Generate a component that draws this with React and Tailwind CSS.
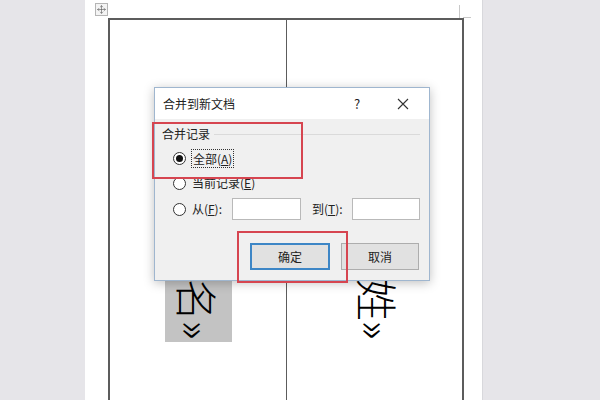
import { Move } from "lucide-react"

const cjk = { fontFamily: '"Noto Sans CJK SC", "Noto Sans", sans-serif' }

function Radio({ checked }) {
    return (
        <span className="flex h-[13px] w-[13px] items-center justify-center rounded-full border border-[#333] bg-white">
            {checked ? <span className="h-[7px] w-[7px] rounded-full bg-[#111]"></span> : null}
        </span>
    )
}

function MergeDialog() {
    return (
        <div
            className="absolute left-[154px] top-[87px] flex h-[194px] w-[276px] flex-col border border-[#9fb6cf] bg-[#f0f0f0] text-[12px] text-[#222] shadow-[0_2px_10px_rgba(0,0,0,0.25)]"
            style={cjk}
        >
            <div className="flex h-[31px] items-center bg-white pl-[8px] pr-[3px]">
                <span className="flex-1">合并到新文档</span>
                <span className="w-[46px] text-center text-[13px]">?</span>
                <span className="flex w-[46px] justify-center">
                    <svg width="12" height="12" viewBox="0 0 12 12">
                        <path d="M1 1L11 11M11 1L1 11" stroke="#333" strokeWidth="1.1" />
                    </svg>
                </span>
            </div>
            <div className="flex flex-col pl-[7px] pr-[9px]">
                <div className="mt-[7px] flex h-[16px] items-center gap-[4px]">
                    <span>合并记录</span>
                    <span className="h-px flex-1 bg-[#dadada]"></span>
                </div>
                <div className="ml-[11px] mt-[4px] flex h-[24px] items-center gap-[5px]">
                    <Radio checked />
                    <span className="border border-dotted border-[#333] px-px leading-[17px]">
                        全部(<u>A</u>)
                    </span>
                </div>
                <div className="ml-[11px] mt-px flex h-[24px] items-center gap-[6px]">
                    <Radio />
                    <span>
                        当前记录(<u>E</u>)
                    </span>
                </div>
                <div className="ml-[11px] mt-[2px] flex h-[24px] items-center">
                    <Radio />
                    <span className="ml-[6px] w-[40px]">
                        从(<u>F</u>):
                    </span>
                    <span className="h-[22px] w-[70px] border border-[#b9b9b9] bg-white"></span>
                    <span className="ml-[11px] w-[40px]">
                        到(<u>T</u>):
                    </span>
                    <span className="h-[22px] w-[69px] border border-[#b9b9b9] bg-white"></span>
                </div>
                <div className="mt-[22px] flex justify-end gap-[11px] pr-px">
                    <span className="flex h-[27px] w-[80px] items-center justify-center border-2 border-[#3d86c6] bg-[#e1e1e1]">
                        确定
                    </span>
                    <span className="flex h-[27px] w-[78px] items-center justify-center border border-[#adadad] bg-[#e1e1e1]">
                        取消
                    </span>
                </div>
            </div>
        </div>
    )
}

export default function App() {
    return (
        <div className="relative flex h-[400px] w-[600px] overflow-hidden bg-[#e6e5e9]">
            <div className="w-[85px]"></div>
            <div className="relative h-full w-[397px] bg-white pl-[23px] pt-[18px]">
                <span className="absolute left-[10px] top-[3px] flex h-[13px] w-[13px] items-center justify-center border border-[#b5b5b5] bg-[#f4f4f4]">
                    <Move size={9} strokeWidth={1.6} color="#555" />
                </span>
                <span className="absolute left-[374px] top-[5px] h-[13px] w-px bg-[#c8c8c8]"></span>
                <span className="absolute left-[378px] top-[17px] h-px w-[8px] bg-[#c8c8c8]"></span>
                <div className="flex h-[400px] w-[356px] border-x-2 border-t-2 border-[#5c5c5c]">
                    <div className="flex w-[177px] flex-col border-r-[1.5px] border-[#5c5c5c] pl-[55px] pt-[180px]">
                        <div className="flex h-[142px] w-[67px] flex-col items-center justify-end bg-[#c3c3c3] pb-[2px]">
                            <span
                                className="text-[42px] font-light leading-[67px] text-black [text-orientation:sideways] [writing-mode:vertical-rl]"
                                style={cjk}
                            >
                                «姓名»
                            </span>
                        </div>
                    </div>
                    <div className="flex flex-1 flex-col pl-[58px] pt-[180px]">
                        <div className="flex h-[142px] w-[67px] flex-col items-center justify-end pb-[2px]">
                            <span
                                className="text-[42px] font-light leading-[67px] text-black [text-orientation:sideways] [writing-mode:vertical-rl]"
                                style={cjk}
                            >
                                «班姓»
                            </span>
                        </div>
                    </div>
                </div>
            </div>
            <div className="flex-1 border-l border-[#d8d8dc]"></div>
            <MergeDialog />
            <div className="absolute left-[152px] top-[122px] h-[57px] w-[151px] border-2 border-[#d64550]"></div>
            <div className="absolute left-[237px] top-[231px] h-[52px] w-[111px] border-2 border-[#d64550]"></div>
        </div>
    )
}
